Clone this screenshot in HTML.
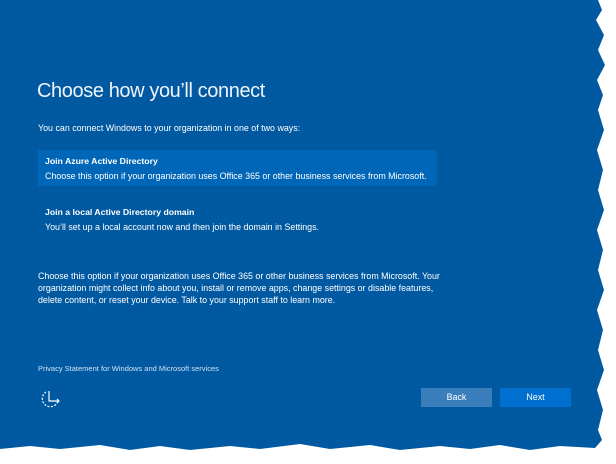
<!DOCTYPE html>
<html><head><meta charset="utf-8"><style>
body{margin:0;width:616px;height:464px;background:#fff;position:relative;overflow:hidden;font-family:"Liberation Sans",sans-serif;color:#fff}
.bg{position:absolute;left:0;top:0;width:616px;height:464px;background:#0059a1;
clip-path:polygon(0 0,598px 0,602px 10px,596px 20px,604px 35px,598px 50px,605px 65px,597px 80px,603px 95px,598px 110px,604px 130px,597px 150px,603px 170px,598px 190px,604px 210px,597px 230px,603px 250px,598px 270px,604px 290px,597px 310px,603px 330px,598px 350px,604px 370px,597px 390px,603px 410px,598px 430px,602px 440px,595px 448px,560px 446px,530px 450px,500px 445px,470px 449px,440px 446px,400px 450px,370px 445px,330px 449px,300px 444px,260px 449px,230px 446px,190px 450px,160px 446px,130px 450px,100px 445px,60px 449px,30px 446px,0 449px)}
div.t{position:absolute;white-space:nowrap}
</style></head><body>
<div class="bg"></div>
<div class="t" style="left:37px;top:80px;font-size:20px;letter-spacing:-0.4px;color:#eef4fa">Choose how you’ll connect</div>
<div class="t" style="left:38px;top:123px;font-size:8.9px">You can connect Windows to your organization in one of two ways:</div>
<div style="position:absolute;left:38px;top:150px;width:399px;height:36px;background:#0067b8"></div>
<div class="t" style="left:45px;top:156px;font-size:8.7px;font-weight:bold">Join Azure Active Directory</div>
<div class="t" style="left:45px;top:171px;font-size:8.9px">Choose this option if your organization uses Office 365 or other business services from Microsoft.</div>
<div class="t" style="left:45px;top:207px;font-size:8.7px;font-weight:bold">Join a local Active Directory domain</div>
<div class="t" style="left:45px;top:222px;font-size:8.9px">You’ll set up a local account now and then join the domain in Settings.</div>
<div class="t" style="left:38px;top:270px;font-size:8.9px;line-height:12px">Choose this option if your organization uses Office 365 or other business services from Microsoft. Your<br>organization might collect info about you, install or remove apps, change settings or disable features,<br>delete content, or reset your device. Talk to your support staff to learn more.</div>
<div class="t" style="left:38px;top:364px;font-size:7.5px;color:#cfe3f5">Privacy Statement for Windows and Microsoft services</div>
<svg style="position:absolute;left:40px;top:388px" width="24" height="22" viewBox="0 0 24 22"><path d="M6 4 A8 8 0 1 0 18 13" fill="none" stroke="#fff" stroke-width="1.2" stroke-dasharray="2 1.5"/><path d="M9 3 V13 H19 M17 11 L19 13 L17 15" fill="none" stroke="#fff" stroke-width="1.2"/></svg>
<div style="position:absolute;left:421px;top:388px;width:71px;height:19px;background:#3a7fbc;font-size:8.9px;text-align:center;line-height:19px">Back</div>
<div style="position:absolute;left:500px;top:388px;width:71px;height:19px;background:#0070d0;font-size:8.9px;text-align:center;line-height:19px">Next</div>
</body></html>
